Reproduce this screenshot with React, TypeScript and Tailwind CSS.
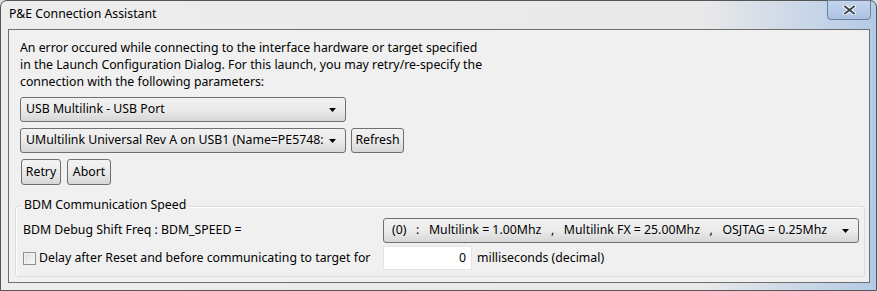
import React from "react";

const font = { fontFamily: '"Noto Sans", "Open Sans", sans-serif' };

function Arrow() {
  return (
    <svg width="7" height="4" viewBox="0 0 7 4" className="shrink-0">
      <path d="M0 0 H7 L3.5 4 Z" fill="#000" />
    </svg>
  );
}

function Combo({ label, className }: { label: string; className: string }) {
  return (
    <div
      className={`flex items-center justify-between rounded-[3px] border border-[#707070] bg-gradient-to-b from-[#f2f2f2] via-[#ebebeb] to-[#d6d6d6] pl-[5px] pr-[9px] text-[#000] ${className}`}
    >
      <span className="overflow-hidden whitespace-pre">{label}</span>
      <Arrow />
    </div>
  );
}

function Btn({ label, className }: { label: string; className: string }) {
  return (
    <div
      className={`flex items-center justify-center rounded-[3px] border border-[#707070] bg-gradient-to-b from-[#f2f2f2] via-[#ebebeb] to-[#d6d6d6] text-[#000] ${className}`}
    >
      {label}
    </div>
  );
}

export default function App() {
  return (
    <div className="w-[878px] h-[291px] overflow-hidden bg-[#dcdcdc]" style={font}>
      <div className="h-[291px] w-[877px] rounded-t-[7px] border border-[#555] bg-gradient-to-r from-[#ededed] via-[#e9e9e9] via-80% to-[#b4cae6] flex flex-col">
        {/* title bar */}
        <div className="h-[28px] flex items-start justify-between">
          <div className="pl-[8px] pt-[4px] text-[12.3px] text-[#000]">P&amp;E Connection Assistant</div>
          <div className="mr-[5px] mt-[-1px] w-[44px] h-[20px] rounded-b-[4px] border border-[#6f7f96] bg-gradient-to-b from-[#c4d5ec] to-[#aac2e3] flex items-center justify-center">
            <svg width="13" height="10" viewBox="0 0 13 10">
              <path d="M2 1.5 L11 8.5 M11 1.5 L2 8.5" stroke="#fff" strokeWidth="3.6" strokeLinecap="square" />
              <path d="M2 1.5 L11 8.5 M11 1.5 L2 8.5" stroke="#3b3f48" strokeWidth="1.8" strokeLinecap="square" />
            </svg>
          </div>
        </div>

        {/* client area */}
        <div className="ml-[7px] mr-[6px] h-[254px] border border-[#6e6e6e] bg-[#f0f0f0] pl-[11px] pr-[4px] text-[12.3px] text-[#000]">
          <p className="mt-[9px] leading-[17px]">
            An error occured while connecting to the interface hardware or target specified
            <br />
            in the Launch Configuration Dialog. For this launch, you may retry/re-specify the
            <br />
            connection with the following parameters:
          </p>

          <Combo label="USB Multilink - USB Port" className="mt-[7px] w-[326px] h-[25px]" />
          <div className="mt-[6px] flex gap-[5px]">
            <Combo label="UMultilink Universal Rev A on USB1 (Name=PE5748:" className="w-[326px] h-[25px]" />
            <Btn label="Refresh" className="w-[53px] h-[25px]" />
          </div>
          <div className="mt-[6px] flex gap-[6px] pl-[1px]">
            <Btn label="Retry" className="w-[40px] h-[26px]" />
            <Btn label="Abort" className="w-[44px] h-[26px]" />
          </div>

          {/* group box */}
          <div className="relative mt-[21px] ml-[-5px] h-[71px] rounded-[3px] border border-[#d5dfe5] shadow-[inset_1px_1px_0_#fff]">
            <div className="absolute left-[6px] top-[-10px] bg-[#f0f0f0] px-[2px] leading-[16px]">
              BDM Communication Speed
            </div>
            <div className="flex items-center pl-[7px] pt-[11px]">
              <span className="w-[360px]">BDM Debug Shift Freq : BDM_SPEED =</span>
              <Combo
                label="(0)   :   Multilink = 1.00Mhz   ,   Multilink FX = 25.00Mhz   ,   OSJTAG = 0.25Mhz"
                className="w-[476px] h-[25px] pl-[8px]"
              />
            </div>
            <div className="flex items-center pl-[7px] pt-[3px]">
              <div className="w-[360px] flex items-center">
                <div className="w-[13px] h-[13px] border border-[#8f8f8f] bg-gradient-to-br from-[#dcdcdc] to-[#fbfbfb] shadow-[inset_0_0_0_1px_#f4f4f4]" />
                <span className="ml-[3px]">Delay after Reset and before communicating to target for</span>
              </div>
              <div className="w-[89px] h-[24px] border border-[#e3e3e3] bg-white flex items-center justify-end pr-[5px]">
                0
              </div>
              <span className="ml-[5px]">milliseconds (decimal)</span>
            </div>
          </div>
        </div>
      </div>
    </div>
  );
}
